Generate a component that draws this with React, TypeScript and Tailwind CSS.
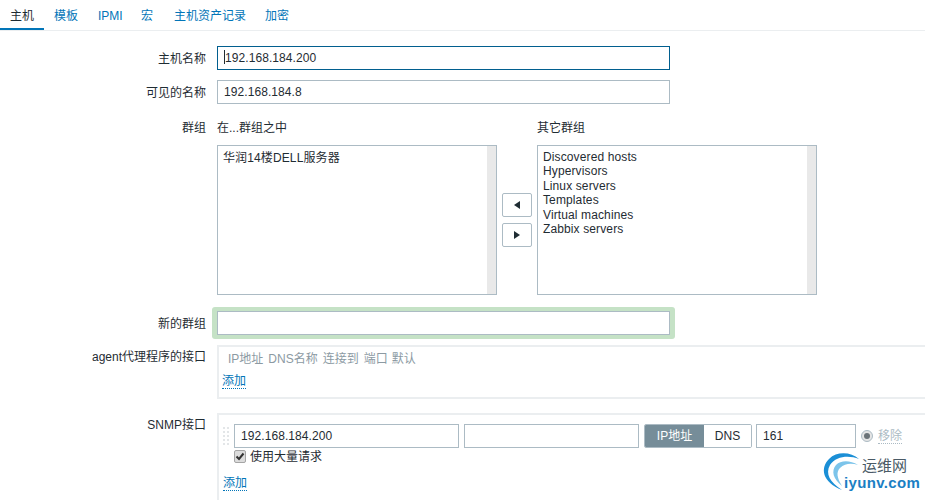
// Zabbix host form, tab "主机"
const font = { fontFamily: '"Liberation Sans", "Noto Sans CJK SC", sans-serif' };

const tabs = [
  { label: '主机', cls: 'w-[44px] pl-[10px]', active: true },
  { label: '模板', cls: 'w-[44px] pl-[10px]' },
  { label: 'IPMI', cls: 'w-[43px] pl-[10px]' },
  { label: '宏', cls: 'w-[33px] pl-[10px]' },
  { label: '主机资产记录', cls: 'w-[91px] pl-[10px]' },
  { label: '加密', cls: 'w-[44px] pl-[10px]' },
];

const otherGroups = ['Discovered hosts', 'Hypervisors', 'Linux servers', 'Templates', 'Virtual machines', 'Zabbix servers'];

function Row({ label, className, labelClass, children }: { label: string; className?: string; labelClass?: string; children: React.ReactNode }) {
  return (
    <div className={`flex ${className ?? ''}`}>
      <div className={`w-[206px] shrink-0 text-right text-[#1f2c33] leading-[14px] ${labelClass ?? ''}`}>{label}</div>
      <div className="ml-[11px] flex-1 min-w-0">{children}</div>
    </div>
  );
}

function TextBox({ value, className, focused }: { value?: string; className?: string; focused?: boolean }) {
  return (
    <div className={`h-[24px] border bg-white pl-[6px] leading-[22px] tracking-[0.08px] text-[#1f2c33] ${focused ? 'border-[#015f8f]' : 'border-[#acbbc4]'} ${className ?? ''}`}>
      {focused && <span className="inline-block h-[14px] w-px bg-[#1f2c33] align-[-2px]" />}
      {value}
    </div>
  );
}

function ListBox({ items, padClass }: { items: string[]; padClass: string }) {
  return (
    <div className="flex h-[150px] w-[280px] border border-[#acbbc4] bg-white">
      <div className={`flex-1 pl-[5px] leading-[14.4px] tracking-[0.12px] text-[#1f2c33] ${padClass}`}>
        {items.map((item) => (
          <div key={item}>{item}</div>
        ))}
      </div>
      <div className="w-[9px] bg-[#e9e9e9]" />
    </div>
  );
}

function ArrowButton({ dir }: { dir: 'left' | 'right' }) {
  return (
    <div className="flex h-[24px] w-[30px] items-center justify-center rounded-[2px] border border-[#acbbc4] bg-white">
      <svg width="6" height="8" viewBox="0 0 6 8">
        <path d={dir === 'left' ? 'M6 0V8L0 4Z' : 'M0 0V8L6 4Z'} fill="#1f2c33" />
      </svg>
    </div>
  );
}

function AddLink() {
  return <span className="border-b border-dotted border-[#0275b8] leading-[14px] text-[#0275b8]">添加</span>;
}

function Watermark() {
  return (
    <div className="absolute left-[820px] top-[451px] h-[49px] w-[105px]">
      <svg className="absolute left-0 top-0" width="42" height="44" viewBox="0 0 42 44" fill="none">
        <path d="M39 8C31 1 17 0 9 8C0 17 2 31 22 39C10 31 5 23 10 14C16 5 29 4 39 8Z" fill="#1b8fd6" />
        <path d="M38 14C30 9 21 9 16 14C11 20 13 28 22 35C17 27 16 21 20 17C25 12 32 12 38 14Z" fill="#7cc4ea" />
      </svg>
      <span className="absolute left-[42px] top-[6px] text-[15px] leading-[18px] text-[#4a5a66]">运维网</span>
      <span className="absolute left-[24px] top-[23px] text-[15px] font-bold leading-[18px] tracking-[0.35px] text-[#1b7fc4]">iyunv.com</span>
    </div>
  );
}

export default function App() {
  return (
    <div className="relative h-[500px] w-[925px] overflow-hidden bg-white text-[12px]" style={font}>
      {/* tabs */}
      <div className="flex h-[31px] border-b border-[#ebeef0]">
        {tabs.map((tab) => (
          <div
            key={tab.label}
            className={`h-[30px] pt-[9px] leading-[14px] ${tab.cls} ${tab.active ? 'border-b-2 border-[#0275b8] text-[#1f2c33]' : 'text-[#0275b8]'}`}
          >
            {tab.label}
          </div>
        ))}
      </div>

      <div className="pt-[15px]">
        <Row label="主机名称" className="items-center" labelClass="pt-[2px]">
          <TextBox value="192.168.184.200" className="w-[453px]" focused />
        </Row>
        <Row label="可见的名称" className="mt-[10px] items-center" labelClass="pt-[2px]">
          <TextBox value="192.168.184.8" className="w-[453px]" />
        </Row>

        <Row label="群组" className="mt-[16px]" labelClass="pt-[1px]">
          <div className="flex">
            <div>
              <div className="h-[25px] pt-[1px] leading-[14px] text-[#1f2c33]">在...群组之中</div>
              <ListBox items={['华润14楼DELL服务器']} padClass="pt-[5px]" />
            </div>
            <div className="ml-[5px] mt-[73px] flex w-[35px] flex-col gap-[6px]">
              <ArrowButton dir="left" />
              <ArrowButton dir="right" />
            </div>
            <div>
              <div className="h-[25px] pt-[1px] leading-[14px] text-[#1f2c33]">其它群组</div>
              <ListBox items={otherGroups} padClass="pt-[4px]" />
            </div>
          </div>
        </Row>

        <Row label="新的群组" className="mt-[16px] items-center" labelClass="pt-[2px]">
          <div className="-mx-[5px] -my-[4px] w-[463px] rounded-[3px] bg-[#c5e2c6] px-[5px] py-[4px]">
            <TextBox />
          </div>
        </Row>

        <Row label="agent代理程序的接口" className="mt-[10px]" labelClass="pt-[5px]">
          <div className="h-[54px] border-2 border-r-0 border-[#ebeef0] pt-[5px]">
            <div className="flex pl-[9px] leading-[14px] text-[#8c9aa3]">
              <span>IP地址</span>
              <span className="ml-[5px]">DNS名称</span>
              <span className="ml-[5px]">连接到</span>
              <span className="ml-[5px]">端口</span>
              <span className="ml-[4px]">默认</span>
            </div>
            <div className="pl-[3px] pt-[8px] leading-[14px]">
              <AddLink />
            </div>
          </div>
        </Row>

        <Row label="SNMP接口" className="mt-[14px]" labelClass="pt-[5px]">
          <div className="h-[100px] border-2 border-r-0 border-[#ebeef0] pt-[9px]">
            <div className="flex items-center pl-[4px]">
              <div className="grid w-[6px] grid-cols-2 gap-[2px]">
                {Array.from({ length: 10 }).map((_, i) => (
                  <span key={i} className="h-[2px] w-[2px] bg-[#e3e6e8]" />
                ))}
              </div>
              <TextBox value="192.168.184.200" className="ml-[5px] w-[225px]" />
              <TextBox className="ml-[5px] w-[175px]" />
              <div className="ml-[5px] flex h-[24px] w-[108px] overflow-hidden rounded-[2px] border border-[#acbbc4] leading-[22px]">
                <div className="w-[59px] bg-[#768d99] text-center text-white">IP地址</div>
                <div className="flex-1 bg-white text-center text-[#1f2c33]">DNS</div>
              </div>
              <TextBox value="161" className="ml-[4px] w-[100px]" />
              <div className="ml-[5px] flex h-[12px] w-[12px] items-center justify-center rounded-full border border-[#acbbc4] bg-[#e4e4e4]">
                <span className="h-[6px] w-[6px] rounded-full bg-[#6b7378]" />
              </div>
              <span className="ml-[5px] border-b border-dotted border-[#acbbc4] leading-[14px] text-[#acbbc4]">移除</span>
            </div>
            <div className="flex items-center pl-[15px] pt-[1px]">
              <div className="flex h-[13px] w-[12px] items-center justify-center rounded-[2px] border border-[#a5a5a5] bg-[#dcdcdc]">
                <svg width="10" height="9" viewBox="0 0 10 9" fill="none">
                  <path d="M1.5 4.5L4 7L8.5 1.5" stroke="#333" strokeWidth="2" />
                </svg>
              </div>
              <span className="ml-[4px] pt-[1px] leading-[14px] text-[#1f2c33]">使用大量请求</span>
            </div>
            <div className="pl-[4px] pt-[12px] leading-[14px]">
              <AddLink />
            </div>
          </div>
        </Row>
      </div>

      <Watermark />
    </div>
  );
}
